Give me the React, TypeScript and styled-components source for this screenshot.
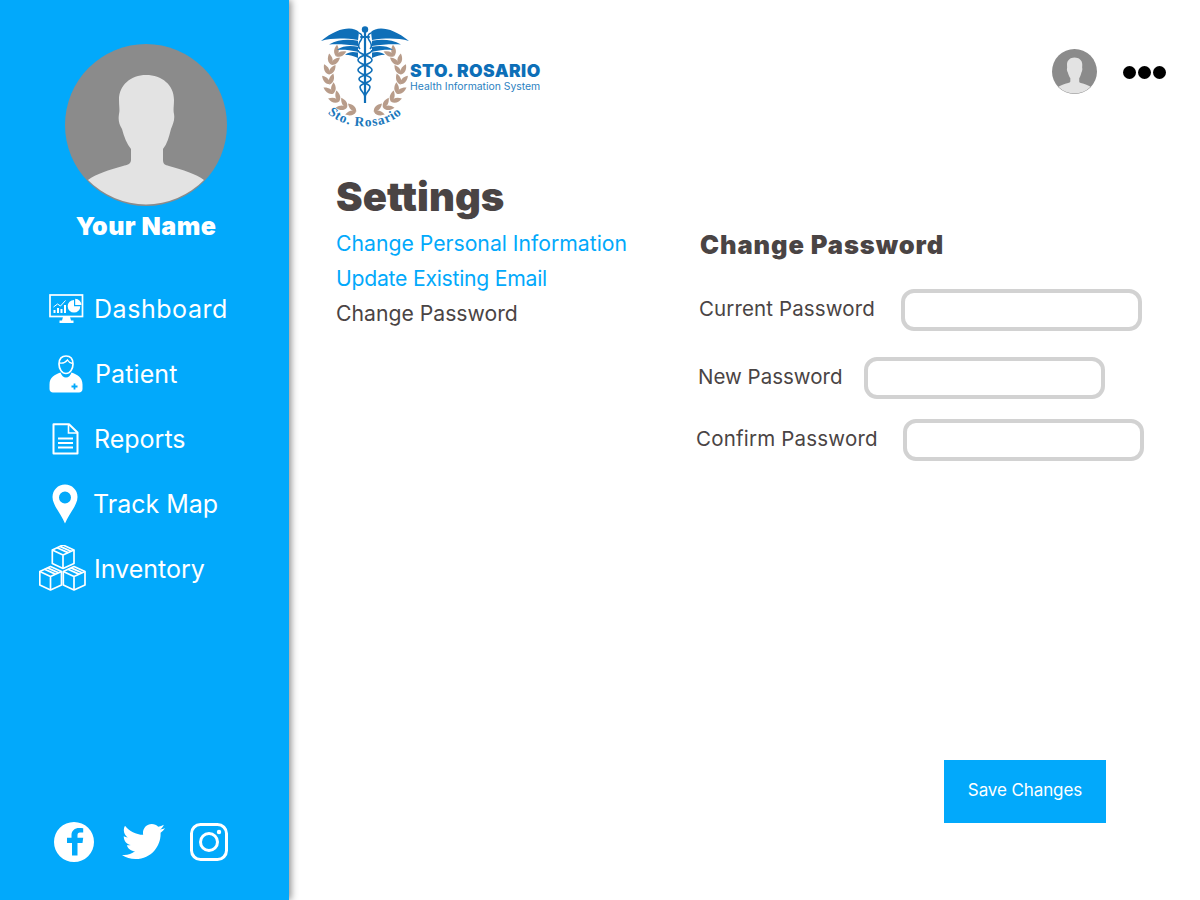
import React from "react";
import styled, { createGlobalStyle } from "styled-components";
import { FaTwitter } from "react-icons/fa";

const BLUE = "#02a9fb";
const INK = "#4a4444";
const FONT = `Inter, "Noto Sans", "Liberation Sans", sans-serif`;

const Global = createGlobalStyle`
  html, body { margin: 0; padding: 0; background: #fff; }
  * { box-sizing: border-box; }
  body { font-family: ${FONT}; overflow: hidden; }
`;

const Page = styled.div`
  display: flex;
  width: 1200px;
  height: 900px;
  overflow: hidden;
  background: #fff;
`;

const Sidebar = styled.aside`
  display: flex;
  flex-direction: column;
  width: 289px;
  height: 900px;
  flex: none;
  padding-top: 44px;
  background: ${BLUE};
  box-shadow: 2px 0 7px rgba(0, 0, 0, 0.45);
  color: #fff;
`;

const BigAvatar = styled.svg`
  display: block;
  width: 162px;
  height: 162px;
  margin-left: 65px;
`;

const UserName = styled.div`
  margin: 2px 0 0 3px;
  text-align: center;
  font-size: 25px;
  line-height: 36px;
  font-weight: 900;
  letter-spacing: 0.45px;
`;

const Nav = styled.nav`
  display: flex;
  flex-direction: column;
  margin-top: 32px;
`;

const NavRow = styled.div`
  display: flex;
  align-items: center;
  height: 65px;
  padding-left: 39px;
`;

const IconSlot = styled.div<{ $inset: number; $slot: number }>`
  display: flex;
  align-items: center;
  width: ${(p) => p.$slot}px;
  flex: none;
  padding-left: ${(p) => p.$inset}px;
`;

const NavLabel = styled.span<{ $track: number }>`
  font-size: 25px;
  line-height: 32px;
  font-weight: 400;
  letter-spacing: ${(p) => p.$track}px;
  white-space: nowrap;
`;

const Socials = styled.div`
  display: flex;
  align-items: center;
  margin-top: auto;
  padding: 0 0 37px 54px;
`;

const SocialLink = styled.span<{ $gap: number }>`
  display: flex;
  margin-right: ${(p) => p.$gap}px;
  color: #fff;
`;

const Main = styled.main`
  display: flex;
  flex-direction: column;
  flex: 1;
  min-width: 0;
  height: 900px;
`;

const Header = styled.header`
  display: flex;
  align-items: flex-start;
  justify-content: space-between;
  height: 172px;
  padding: 25px 34px 0 31px;
  flex: none;
`;

const Logo = styled.div`
  display: flex;
  align-items: flex-start;
`;

const Emblem = styled.svg`
  display: block;
  width: 90px;
  height: 105px;
`;

const Brand = styled.div`
  display: flex;
  flex-direction: column;
  margin-top: 36px;
`;

const BrandName = styled.div`
  font-size: 17.5px;
  line-height: 20px;
  font-weight: 900;
  letter-spacing: 0.42px;
  color: #0d6fb8;
  white-space: nowrap;
`;

const BrandSub = styled.div`
  font-size: 10.4px;
  line-height: 11px;
  color: #2a7fc1;
  white-space: nowrap;
`;

const UserArea = styled.div`
  display: flex;
  align-items: center;
  gap: 26px;
  margin-top: 24px;
`;

const SmallAvatar = styled.svg`
  display: block;
  width: 45px;
  height: 45px;
`;

const Dots = styled.div`
  display: flex;
  gap: 2px;
  margin-top: 2px;
`;

const Dot = styled.span`
  width: 13px;
  height: 13px;
  border-radius: 50%;
  background: #000;
`;

const Content = styled.div`
  display: grid;
  grid-template-columns: 360px 1fr;
  padding-left: 47px;
`;

const Menu = styled.div`
  display: flex;
  flex-direction: column;
`;

const Title = styled.h1`
  margin: 0 0 4px;
  font-size: 40px;
  line-height: 50px;
  font-weight: 900;
  letter-spacing: 0;
  color: ${INK};
`;

const MenuItem = styled.div<{ $active?: boolean; $track?: number }>`
  font-size: 21.2px;
  line-height: 35px;
  letter-spacing: ${(p) => p.$track ?? 0}px;
  white-space: nowrap;
  color: ${(p) => (p.$active ? INK : BLUE)};
`;

const Form = styled.section`
  display: flex;
  flex-direction: column;
  padding-top: 55px;
`;

const FormTitle = styled.h2`
  margin: 0 0 1px 4px;
  font-size: 25.5px;
  line-height: 35px;
  font-weight: 900;
  letter-spacing: 0.9px;
  color: ${INK};
  white-space: nowrap;
`;

const FieldRow = styled.div<{ $top: number; $indent: number; $label: number }>`
  display: grid;
  grid-template-columns: ${(p) => p.$label}px 241px;
  align-items: start;
  margin-top: ${(p) => p.$top}px;
  margin-left: ${(p) => p.$indent}px;
`;

const FieldLabel = styled.label<{ $track: number }>`
  font-size: 20.5px;
  line-height: 40px;
  letter-spacing: ${(p) => p.$track}px;
  color: ${INK};
  white-space: nowrap;
`;

const FieldInput = styled.input`
  width: 241px;
  height: 42px;
  border: 4px solid #d2d2d2;
  border-radius: 13px;
  background: #fff;
  outline: none;
`;

const Actions = styled.div`
  display: flex;
  justify-content: flex-end;
  margin-top: auto;
  padding: 0 94px 77px 0;
`;

const SaveButton = styled.button`
  width: 162px;
  height: 63px;
  padding: 0 0 3px;
  border: 0;
  background: ${BLUE};
  color: #fff;
  font-family: ${FONT};
  font-size: 17px;
  letter-spacing: -0.1px;
`;

const bust =
  "M81 31C97 31 109 41 109 56C109 62 108 66 109 70C110 76 108 80 106 85C104 93 102 100 98 105L98 116C98 120 100 121 104 122C118 126 131 130 139 136A81 81 0 0 1 23 136C31 130 44 126 58 122C62 121 66 120 66 116L66 105C62 100 59 93 57 85C54 80 53 76 54 70C55 66 54 62 54 56C54 41 66 31 81 31Z";

const AvatarArt = () => (
  <>
    <circle cx="81" cy="81" r="81" fill="#8b8b8b" />
    <path d={bust} fill="#e3e3e3" />
  </>
);

const DashboardIcon = () => (
  <svg width="35" height="30" viewBox="0 0 35 30" fill="none">
    <rect x="1" y="1" width="32.5" height="21.5" stroke="#fff" strokeWidth="1.7" />
    <path d="M14 23h7l1 3.5h-9zM10.5 26.5h14V29h-14z" fill="#fff" />
    <path d="M4.5 19v-3h2v3zM8 19v-5h2v5zM11.5 19v-4h2v4zM15 19v-8h2v8z" fill="#fff" />
    <path d="M4.5 13l4-3 3 2 5-5.5" stroke="#fff" strokeWidth="1" />
    <path d="M25 6a6.3 6.3 0 1 0 6.3 6.3H25z" fill="#fff" />
    <path d="M26.2 4.8v6.3h6.3a6.3 6.3 0 0 0-6.3-6.3z" fill="#fff" />
  </svg>
);

const PatientIcon = () => (
  <svg width="34" height="38" viewBox="0 0 34 38" fill="none">
    <path d="M10 9C10 3.5 13 1 17 1s7 2.5 7 8c0 5-3 9.5-7 9.5S10 14 10 9z" stroke="#fff" strokeWidth="1.7" />
    <path d="M10.5 8c3 .5 6-.5 8-3 1 2 3 3 5 3.5" stroke="#fff" strokeWidth="1.3" />
    <path d="M11.5 17.5C12.5 20.5 14.5 22.5 17 22.5s4.5-2 5.5-5C28 19.5 33.5 22 33.5 29.5V34c0 2-1.5 3.5-3.5 3.5H4C2 37.5.5 36 .5 34v-4.5C.5 22 6 19.5 11.5 17.5z" fill="#fff" />
    <path d="M25.5 28.5v6M22.5 31.5h6" stroke={BLUE} strokeWidth="1.8" />
  </svg>
);

const ReportsIcon = () => (
  <svg width="27" height="32" viewBox="0 0 27 32" fill="none">
    <path d="M1.5 1.2H17L25.5 9.5V30.5H1.5z" stroke="#fff" strokeWidth="2" strokeLinejoin="round" />
    <path d="M16.5 1.5V10H25.5" stroke="#fff" strokeWidth="1.6" />
    <path d="M6 15.5h15M6 20h15M6 24.5h15" stroke="#fff" strokeWidth="2" />
  </svg>
);

const MapIcon = () => (
  <svg width="26" height="40" viewBox="0 0 26 40">
    <path
      fillRule="evenodd"
      d="M13 .5C20 .5 25.5 6 25.5 13c0 8-8 16-12.5 26.5C8.5 29 .5 21 .5 13 .5 6 6 .5 13 .5zM13 7.5a6 6 0 1 0 0 12 6 6 0 0 0 0-12z"
      fill="#fff"
    />
  </svg>
);

const Box = ({ x, y }: { x: number; y: number }) => (
  <g transform={`translate(${x} ${y})`} stroke="#fff" strokeWidth="1.7" strokeLinejoin="round" fill={BLUE}>
    <path d="M11.5 1L22.5 6V19.5L11.5 24.5L.8 19.5V6z" />
    <path d="M.8 6L11.5 11L22.5 6M11.5 11V24.5" fill="none" />
    <path d="M5.5 3.8L16.5 8.6M8.5 2.4L19.5 7.2" fill="none" />
  </g>
);

const InventoryIcon = () => (
  <svg width="47" height="47" viewBox="0 1 47 47">
    <Box x={12.5} y={0} />
    <Box x={0} y={21.5} />
    <Box x={23.5} y={21.5} />
  </svg>
);

const FacebookIcon = () => (
  <svg width="40" height="40" viewBox="0 0 40 40">
    <path
      fillRule="evenodd"
      fill="#fff"
      d="M20 0a20 20 0 1 1 0 40a20 20 0 1 1 0-40zM18 33.5h5.5V21h5l.7-5.2h-5.700v-2.500c0-1.800.7-2.700 2.500-2.700h3.200V6.200c-1.300-.2-2.700-.3-4-.3-4.500 0-7.700 2.700-7.700 7v2.900h-4.500V21H18z"
    />
  </svg>
);

const InstagramIcon = () => (
  <svg width="38" height="38" viewBox="0 0 38 38" fill="none" stroke="#fff">
    <rect x="1.5" y="1.5" width="35" height="35" rx="9" strokeWidth="3" />
    <circle cx="19" cy="19" r="8.5" strokeWidth="3" />
    <circle cx="29" cy="9" r="2.2" fill="#fff" stroke="none" />
  </svg>
);

const wingFeathers = [
  "M39 7C33 1 18 2 1 16C12 13 24 13 38 15z",
  "M38 15.8C28 14 18 14.5 9 19.5C18 19 28 19.5 38 21z",
  "M38 21.800C31 20.500 23 20.500 17 24.800C24 24.500 31 25 38 26.800z",
  "M38 27.500C33 26.500 29 26.500 25 29.800C30 30 34 31 38 33z",
];

const leafAngles = [104, 120, 136, 152, 168, 184, 200, 216];

const Laurel = () => (
  <g fill="#b89c8a">
    {leafAngles.map((angle) => {
      const rad = (angle * Math.PI) / 180;
      const x = 45 + 36 * Math.cos(rad);
      const y = 52 + 35.5 * Math.sin(rad);
      return (
        <g key={angle} transform={`translate(${x} ${y}) rotate(${angle - 90})`}>
          <path d="M0 0C-3 -3 -7 -3.200 -11.500 0C-7 3.200 -3 3 0 0z" transform="rotate(30)" />
          <path d="M0 0C-3 -3 -7 -3.200 -11.500 0C-7 3.200 -3 3 0 0z" transform="rotate(-30)" />
        </g>
      );
    })}
  </g>
);

const Mirror = styled.g`
  transform: matrix(-1, 0, 0, 1, 90, 0);
`;

const EmblemArt = () => (
  <>
    <Laurel />
    <Mirror>
      <Laurel />
    </Mirror>
    <g fill="#0f6fb8">
      {wingFeathers.map((d) => (
        <path key={d} d={d} />
      ))}
      <Mirror>
        {wingFeathers.map((d) => (
          <path key={d} d={d} />
        ))}
      </Mirror>
      <circle cx="45" cy="4.5" r="3.2" />
      <rect x="43.9" y="6" width="2.2" height="72" />
      <rect x="40" y="11" width="10" height="2" rx="1" />
    </g>
    <g fill="none" stroke="#0f6fb8" strokeWidth="1.6">
      <path d="M39 8C42 9 43 12 41 15C38 19 38 22 40 24" />
      <path d="M51 8C48 9 47 12 49 15C52 19 52 22 50 24" />
      <path d="M38 25C38 30 52 30 52 35C52 40 38 40 38 45C38 50 51 50 51 54C51 58 40 58 40 62C40 66 45 68 45 72" />
      <path d="M52 25C52 30 38 30 38 35C38 40 52 40 52 45C52 50 39 50 39 54C39 58 50 58 50 62C50 66 45 68 45 72" />
    </g>
    <path id="emblem-arc" d="M5 85C22 107 68 107 85 85" fill="none" />
    <text fill="#1b77bb" fontFamily="'Liberation Serif', serif" fontWeight="700" fontSize="13.5" letterSpacing="0.9">
      <textPath href="#emblem-arc" startOffset="50%" textAnchor="middle">
        Sto. Rosario
      </textPath>
    </text>
  </>
);

const navItems = [
  { label: "Dashboard", inset: 10, slot: 55, track: 0.55, icon: <DashboardIcon /> },
  { label: "Patient", inset: 10, slot: 56, track: 0.1, icon: <PatientIcon /> },
  { label: "Reports", inset: 13, slot: 55, track: 0, icon: <ReportsIcon /> },
  { label: "Track Map", inset: 13, slot: 54, track: 0, icon: <MapIcon /> },
  { label: "Inventory", inset: 0, slot: 55, track: 0, icon: <InventoryIcon /> },
];

const fields = [
  { label: "Current Password", top: 26, indent: 3, width: 202, track: 0.12 },
  { label: "New Password", top: 26, indent: 2, width: 166, track: 0 },
  { label: "Confirm Password", top: 20, indent: 0, width: 207, track: 0.2 },
];

export default function App() {
  return (
    <Page>
      <Global />
      <Sidebar>
        <BigAvatar viewBox="0 0 162 162">
          <AvatarArt />
        </BigAvatar>
        <UserName>Your Name</UserName>
        <Nav>
          {navItems.map((item) => (
            <NavRow key={item.label}>
              <IconSlot $inset={item.inset} $slot={item.slot}>
                {item.icon}
              </IconSlot>
              <NavLabel $track={item.track}>{item.label}</NavLabel>
            </NavRow>
          ))}
        </Nav>
        <Socials>
          <SocialLink $gap={28}>
            <FacebookIcon />
          </SocialLink>
          <SocialLink $gap={25}>
            <FaTwitter size={43} />
          </SocialLink>
          <SocialLink $gap={0}>
            <InstagramIcon />
          </SocialLink>
        </Socials>
      </Sidebar>
      <Main>
        <Header>
          <Logo>
            <Emblem viewBox="0 0 90 105">
              <EmblemArt />
            </Emblem>
            <Brand>
              <BrandName>STO. ROSARIO</BrandName>
              <BrandSub>Health Information System</BrandSub>
            </Brand>
          </Logo>
          <UserArea>
            <SmallAvatar viewBox="0 0 162 162">
              <AvatarArt />
            </SmallAvatar>
            <Dots>
              <Dot />
              <Dot />
              <Dot />
            </Dots>
          </UserArea>
        </Header>
        <Content>
          <Menu>
            <Title>Settings</Title>
            <MenuItem>Change Personal Information</MenuItem>
            <MenuItem $track={-0.25}>Update Existing Email</MenuItem>
            <MenuItem $active>Change Password</MenuItem>
          </Menu>
          <Form>
            <FormTitle>Change Password</FormTitle>
            {fields.map((f) => (
              <FieldRow key={f.label} $top={f.top} $indent={f.indent} $label={f.width}>
                <FieldLabel $track={f.track}>{f.label}</FieldLabel>
                <FieldInput type="password" aria-label={f.label} />
              </FieldRow>
            ))}
          </Form>
        </Content>
        <Actions>
          <SaveButton>Save Changes</SaveButton>
        </Actions>
      </Main>
    </Page>
  );
}
